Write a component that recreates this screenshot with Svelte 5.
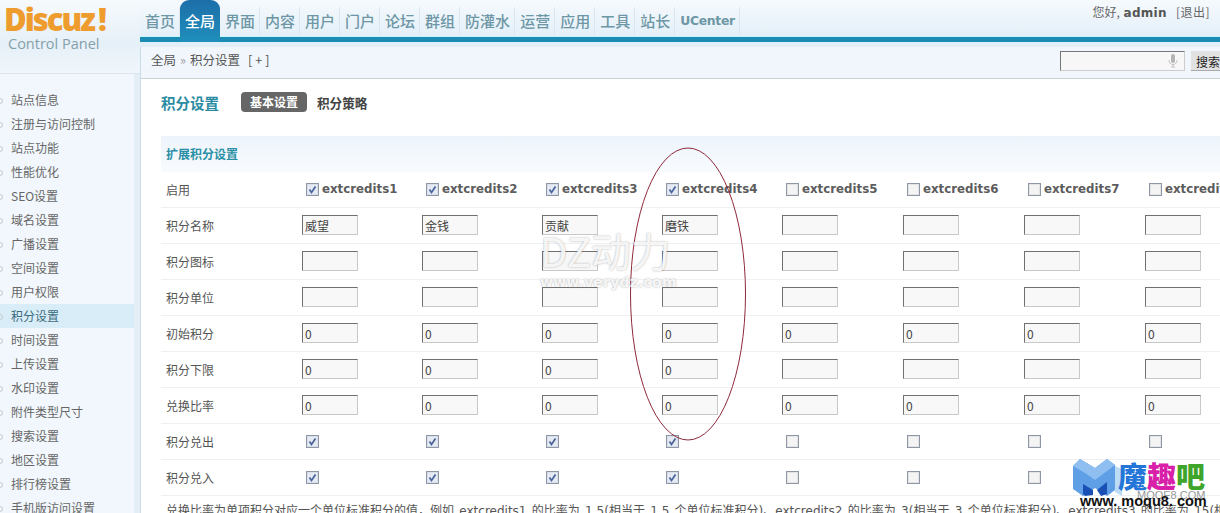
<script>
  const navItems = ["首页", "全局", "界面", "内容", "用户", "门户", "论坛", "群组", "防灌水", "运营", "应用", "工具", "站长", "UCenter"];
  const sideItems = ["站点信息", "注册与访问控制", "站点功能", "性能优化", "SEO设置", "域名设置", "广播设置", "空间设置", "用户权限", "积分设置", "时间设置", "上传设置", "水印设置", "附件类型尺寸", "搜索设置", "地区设置", "排行榜设置", "手机版访问设置"];
  const cols = [1, 2, 3, 4, 5, 6, 7, 8];
  const names = ["威望", "金钱", "贡献", "磨铁", "", "", "", ""];
  const inputRows = [
    { label: "积分图标", values: cols.map(() => "") },
    { label: "积分单位", values: cols.map(() => "") },
    { label: "初始积分", values: cols.map(() => "0") },
    { label: "积分下限", values: cols.map((c) => (c <= 4 ? "0" : "")) },
    { label: "兑换比率", values: cols.map(() => "0") }
  ];
  const checkRows = ["积分兑出", "积分兑入"];
</script>

{#snippet check(on)}
  <svg class="check" width="13" height="13" viewBox="0 0 13 13">
    <rect x="0.5" y="0.5" width="12" height="12" fill={on ? "#d8deea" : "#e4e4e4"} stroke="#8f97a6" />
    <rect x="2" y="2" width="9" height="9" fill={on ? "#e6eaf3" : "#f4f4f4"} />
    {#if on}
      <path d="M3.5 6.5 L5.5 9.5 L9.5 3.5" fill="none" stroke="#47649c" stroke-width="1.7" />
    {/if}
  </svg>
{/snippet}

<div class="page">
  <div class="head">
    <div class="logo">
      <div class="brand">Discuz<span class="bang">!</span></div>
      <div class="panel">Control Panel</div>
    </div>
    <div class="headmain">
      <div class="topbar">
        <ul class="nav">
          {#each navItems as item}
            <li class:active={item === "全局"} class:latin={item === "UCenter"}>{item}</li>
          {/each}
        </ul>
        <div class="user">您好, <b>admin</b><span class="logout">[退出]</span></div>
      </div>
      <div class="crumb">
        <div class="path">全局<span class="sep">»</span>积分设置<span class="more">[+]</span></div>
        <div class="search">
          <div class="searchbox">
            <svg width="10" height="14" viewBox="0 0 10 14">
              <rect x="3" y="0" width="4" height="9" rx="2" fill="#b4b4b4" />
              <path d="M1 6 C1 12 9 12 9 6 M5 10 V13 M3 13 H7" fill="none" stroke="#c4c4c4" />
            </svg>
          </div>
          <div class="searchbtn">搜索</div>
        </div>
      </div>
    </div>
  </div>

  <div class="body">
    <ul class="side">
      {#each sideItems as item}
        <li class:current={item === "积分设置"}>{item}</li>
      {/each}
    </ul>
    <div class="content">
      <div class="title">
        <h3>积分设置</h3>
        <span class="pill">基本设置</span>
        <span class="tab">积分策略</span>
      </div>
      <div class="section">扩展积分设置</div>
      <div class="row">
        <div class="label">启用</div>
        {#each cols as c}
          <div class="cell credit">{@render check(c <= 4)}<b>extcredits{c}</b></div>
        {/each}
      </div>
      <div class="row">
        <div class="label">积分名称</div>
        {#each names as name}
          <div class="cell"><div class="txt">{name}</div></div>
        {/each}
      </div>
      {#each inputRows as row}
        <div class="row">
          <div class="label">{row.label}</div>
          {#each row.values as v}
            <div class="cell"><div class="txt">{v}</div></div>
          {/each}
        </div>
      {/each}
      {#each checkRows as label}
        <div class="row">
          <div class="label">{label}</div>
          {#each cols as c}
            <div class="cell credit">{@render check(c <= 4)}</div>
          {/each}
        </div>
      {/each}
      <p class="note">兑换比率为单项积分对应一个单位标准积分的值，例如 extcredits1 的比率为 1.5(相当于 1.5 个单位标准积分)、extcredits2 的比率为 3(相当于 3 个单位标准积分)、extcredits3 的比率为 15(相当于 15 个单位标准积分)</p>
    </div>
  </div>

  <svg class="ring" width="120" height="298" viewBox="0 0 120 298">
    <ellipse cx="59" cy="148" rx="57.5" ry="146" fill="none" stroke="#8e2a3a" stroke-width="1" />
  </svg>

  <div class="mark">
    <div class="mark-big">DZ动力</div>
    <div class="mark-small">www.verydz.com</div>
  </div>

  <div class="moqu">
    <svg width="50" height="44" viewBox="0 0 50 44">
      <!-- pale right edge -->
      <path d="M42 8 L49 11 L49 38 L42 34 Z" fill="#bcdcf6" />
      <!-- body -->
      <path d="M0 8 L7 1 L22 10 L34 1 L42 7 L42 32 L34 38 L22 30 L10 38 L0 31 Z" fill="#5f9fe6" />
      <!-- lighter tops -->
      <path d="M0 8 L7 1 L22 10 L34 1 L42 7 L30 16 L22 22 L12 15 Z" fill="#8fbff0" />
      <!-- dark feet -->
      <path d="M10 26 L20 32 L20 37 L12 38 L10 36 Z M24 32 L34 24 L34 36 L28 38 Z" fill="#1a4fb4" />
    </svg>
    <div class="moqu-name"><span class="c1">魔</span><span class="c2">趣</span><span class="c3">吧</span></div>
    <div class="moqu-ghost">MOQE8.COM</div>
    <div class="moqu-url">www. moqu8. com</div>
  </div>
</div>

<style>
  :global(body) {
    margin: 0;
    background: #fff;
  }
  .page {
    position: relative;
    width: 1220px;
    height: 513px;
    overflow: hidden;
    background: #fff;
    font: 12px "Noto Sans CJK SC", sans-serif;
    color: #555;
  }
  ul {
    list-style: none;
    margin: 0;
    padding: 0;
  }

  .head {
    display: flex;
    height: 74px;
    background: linear-gradient(#f8fbfd, #e3eff8 42px);
  }
  .logo {
    width: 140px;
    flex: none;
    padding: 2px 0 0 4px;
    box-sizing: border-box;
    border-bottom: 1px solid #d8e3ea;
    height: 74px;
    background: linear-gradient(#f6fafd, #e6f0f8 60%, #f0f6fb);
  }
  .brand {
    font: 800 31px/34px "Open Sans", sans-serif;
    letter-spacing: -2px;
    color: #ee9c2e;
  }
  .bang {
    margin-left: 4px;
  }
  .panel {
    margin: 0 0 0 4px;
    font: 14.5px/16px "Open Sans", sans-serif;
    color: #84a0aa;
  }
  .headmain {
    flex: 1;
    min-width: 0;
  }
  .topbar {
    display: flex;
    justify-content: space-between;
    height: 37px;
    background: linear-gradient(#f6fafd, #e3eff8);
    border-bottom: 5px solid #1b8db5;
    box-shadow: inset 0 -1px 0 #c8f4fb;
  }
  .nav {
    display: flex;
  }
  .nav li {
    height: 28px;
    margin-top: 7px;
    padding: 0 4px 0 5px;
    line-height: 28px;
    font-size: 15px;
    font-weight: 500;
    color: #6d97a6;
    border-right: 1px solid #dbe7ef;
    flex: none;
  }
  .nav li.active {
    width: 40px;
    height: 42px;
    margin: 0;
    padding: 7px 0 0;
    box-sizing: border-box;
    text-align: center;
    border: 0;
    border-radius: 9px 9px 0 0;
    color: #fff;
    background: linear-gradient(#1d6ea8, #1f8fbc);
  }
  .nav li.latin {
    font: bold 12.4px/28px "DejaVu Sans", sans-serif;
    letter-spacing: -0.3px;
  }
  .user {
    padding: 3px 10px 0 0;
    line-height: 18px;
    color: #666;
    white-space: nowrap;
  }
  .user b {
    margin-left: 1px;
    font-family: "DejaVu Sans", sans-serif;
    font-size: 12px;
    letter-spacing: 0.3px;
    color: #555;
  }
  .logout {
    margin-left: 9px;
    letter-spacing: 0.5px;
  }
  .crumb {
    display: flex;
    justify-content: space-between;
    height: 32px;
    box-sizing: border-box;
    margin-top: 5px;
    padding: 0 0 0 10px;
    background: #f0f6fb;
    border-left: 1px solid #c9dde6;
    border-bottom: 1px solid #c8d0d4;
    line-height: 26px;
    font-size: 12.5px;
  }
  .sep {
    margin: 0 4px;
    color: #999;
  }
  .more {
    margin-left: 8px;
    letter-spacing: 3px;
  }
  .search {
    display: flex;
    gap: 6px;
    padding-top: 4px;
    margin-right: -40px;
  }
  .searchbox {
    width: 125px;
    height: 20px;
    box-sizing: border-box;
    display: flex;
    justify-content: flex-end;
    align-items: center;
    padding-right: 6px;
    border: 1px solid;
    border-color: #777 #ccc #ccc #777;
    background: #f7f7f7;
  }
  .searchbtn {
    width: 69px;
    height: 20px;
    padding-left: 5px;
    box-sizing: border-box;
    background: #e2e2e2;
    border-bottom: 1px solid #aaa;
    line-height: 22px;
    font-size: 12px;
    color: #222;
  }

  .body {
    display: flex;
    height: 439px;
  }
  .side {
    width: 134px;
    flex: none;
    padding-top: 14px;
    background: #f1f7fc;
    border-right: 6px solid #e3eef6;
    box-shadow: 1px 0 0 #c9dde6;
  }
  .side li {
    position: relative;
    height: 24px;
    line-height: 24px;
    padding-left: 11px;
    white-space: nowrap;
    color: #666;
  }
  .side li::before {
    content: "";
    position: absolute;
    left: -3px;
    top: 10px;
    width: 4px;
    height: 4px;
    border: 1px solid #c4ccd2;
    border-radius: 50%;
  }
  .side li.current {
    background: #d9edf8;
    color: #3c6c7e;
  }

  .content {
    flex: 1;
    min-width: 0;
    padding: 0 0 0 21px;
  }
  .title {
    display: flex;
    align-items: center;
    height: 56px;
    padding-bottom: 6px;
    white-space: nowrap;
  }
  h3 {
    margin: 0 21px 0 0;
    width: 59px;
    font-size: 14.5px;
    color: #2b8ba3;
  }
  .pill {
    width: 66px;
    height: 20px;
    text-align: center;
    line-height: 20px;
    border-radius: 4px;
    background: #666;
    color: #fff;
    font-weight: 700;
  }
  .tab {
    margin-left: 10px;
    font-weight: 700;
    font-size: 12.6px;
    color: #444;
  }
  .section {
    height: 36px;
    line-height: 36px;
    padding-left: 5px;
    background: linear-gradient(#edf4fb, #f8fbfe);
    color: #2a8fa6;
    font-weight: 700;
  }
  .row {
    display: flex;
    align-items: center;
    height: 36px;
    padding-bottom: 1px;
    box-sizing: border-box;
    border-bottom: 1px solid #eef1f3;
    white-space: nowrap;
  }
  .label {
    width: 141px;
    padding-left: 5px;
    box-sizing: border-box;
    flex: none;
  }
  .cell {
    width: 120px;
    flex: none;
  }
  .cell:nth-child(n + 6) {
    width: 121px;
  }
  .credit {
    display: flex;
    align-items: center;
    gap: 3px;
    padding-left: 4px;
    box-sizing: border-box;
  }
  .credit b {
    font: bold 11.8px "DejaVu Sans", sans-serif;
    color: #5c5c5c;
  }
  .check {
    flex: none;
  }
  .txt {
    width: 56px;
    height: 20px;
    box-sizing: border-box;
    padding-left: 2px;
    line-height: 20px;
    border: 1px solid;
    border-color: #707070 #c8c8c8 #c8c8c8 #707070;
    background: #f8f8f8;
    color: #444;
  }
  .note {
    margin: 6px 0 0;
    padding-left: 5px;
    white-space: nowrap;
    font-family: "DejaVu Sans", "Noto Sans CJK SC", sans-serif;
    font-size: 12px;
    word-spacing: 1.5px;
    line-height: 18px;
    color: #555;
  }

  .ring {
    position: absolute;
    left: 629px;
    top: 146px;
  }
  .mark {
    position: absolute;
    left: 540px;
    top: 226px;
    color: rgba(255, 255, 255, 0.9);
    text-shadow: 0 0 2px rgba(130, 130, 130, 0.7);
    white-space: nowrap;
  }
  .mark-big {
    font-size: 40px;
    line-height: 48px;
  }
  .mark-small {
    font: bold 14px/16px "DejaVu Sans", sans-serif;
    letter-spacing: 0.2px;
  }
  .moqu {
    position: absolute;
    left: 1073px;
    top: 458px;
    width: 147px;
    height: 50px;
  }
  .moqu-name {
    position: absolute;
    left: 45px;
    top: 0;
    font-size: 29px;
    line-height: 34px;
    font-weight: 900;
    white-space: nowrap;
  }
  .c1 { color: #2376d8; }
  .c2 { color: #d821a8; }
  .c3 { color: #3fa52a; }
  .moqu-ghost {
    position: absolute;
    left: 64px;
    top: 31px;
    font: 11px "Liberation Sans", sans-serif;
    color: #999;
  }
  .moqu-url {
    position: absolute;
    left: 7px;
    top: 35px;
    font: bold 14.5px "Liberation Sans", sans-serif;
    color: #111;
    white-space: nowrap;
  }
</style>
